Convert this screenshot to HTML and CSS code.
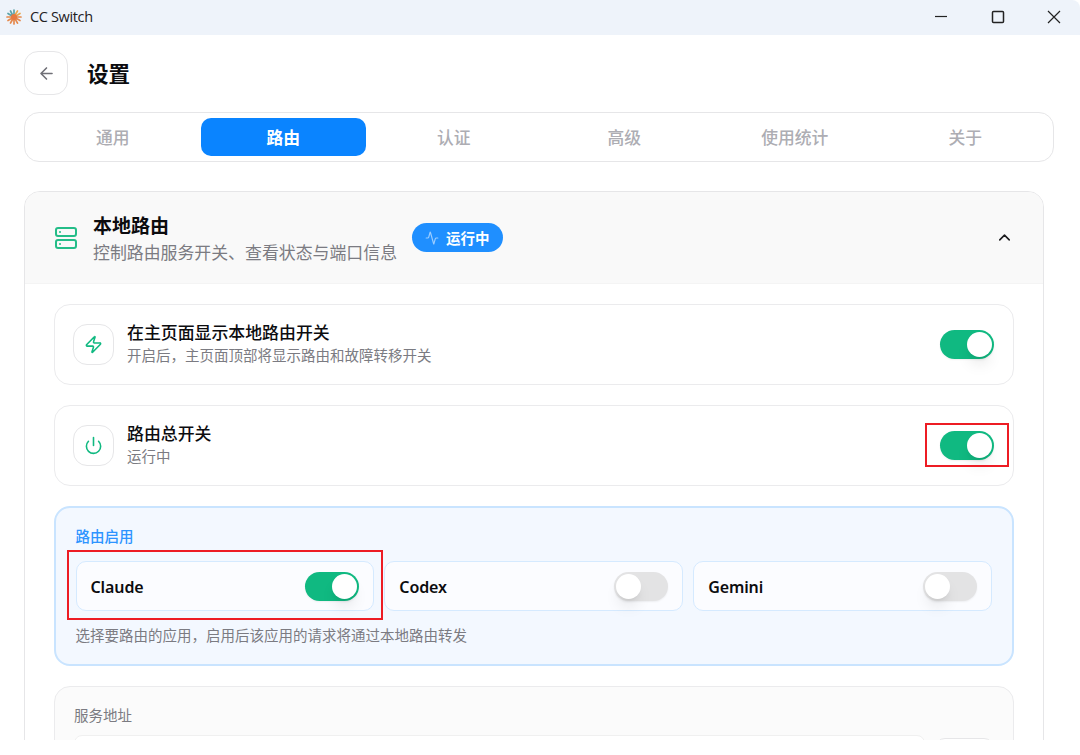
FILE: index.html
```
<!DOCTYPE html>
<html lang="zh-CN">
<head>
  <meta charset="UTF-8">
  <meta name="viewport" content="width=device-width, initial-scale=1.0">
  <title>CC Switch</title>
  <link rel="stylesheet" href="styles.css">
</head>
<body>
  <div class="window">
    <header class="titlebar">
      <svg class="app-logo" viewBox="0 0 16 16" fill="none" stroke-width="1.7" stroke-linecap="round">
        <path stroke="#e58a4e" d="M8 8L15 8M8 8L14 11.5M8 8L11.5 14.2M8 8V15M8 8L4.5 14M8 8L2 11.5M8 8L1 8"/>
        <path stroke="#5ba3a8" d="M6 7L2 4.500M6.500 6L4.500 2M8 5.500V1"/>
        <path stroke="#eba94f" d="M9 6L11.5 2M10 7L14 4.500"/>
        <circle cx="8" cy="8" r="3" fill="#e5793f"/>
      </svg>
      <span class="app-name">CC Switch</span>
      <div class="window-buttons">
        <svg viewBox="0 0 14 14"><path d="M1 6.500H13"/></svg>
        <svg viewBox="0 0 14 14"><rect x="1.500" y="1.500" width="11" height="11" rx="1" stroke-width="1.5"/></svg>
        <svg viewBox="0 0 14 14"><path d="M1 1L13 13M13 1L1 13"/></svg>
      </div>
    </header>

    <div class="page-header">
      <button type="button" class="back-button">
        <svg class="icon" viewBox="0 0 24 24"><path d="m12 19-7-7 7-7M19 12H5"/></svg>
      </button>
      <h1>设置</h1>
    </div>

    <nav class="tabs">
      <button type="button" class="tab">通用</button>
      <button type="button" class="tab active">路由</button>
      <button type="button" class="tab">认证</button>
      <button type="button" class="tab">高级</button>
      <button type="button" class="tab">使用统计</button>
      <button type="button" class="tab">关于</button>
    </nav>

    <section class="panel">
      <div class="panel-header">
        <svg class="icon server-icon" viewBox="0 0 24 24"><rect x="2" y="2" width="20" height="8" rx="2"/><rect x="2" y="14" width="20" height="8" rx="2"/><path d="M6 6h.01M6 18h.01"/></svg>
        <div class="panel-heading">
          <h2>本地路由</h2>
          <p>控制路由服务开关、查看状态与端口信息</p>
        </div>
        <span class="badge">
          <svg class="icon" viewBox="0 0 24 24"><path d="M22 12h-2.480a2 2 0 0 0-1.930 1.460l-2.350 8.360a.25.25 0 0 1-.48 0L9.240 2.180a.25.25 0 0 0-.48 0l-2.350 8.360A2 2 0 0 1 4.490 12H2"/></svg>
          <span>运行中</span>
        </span>
        <svg class="icon chevron" viewBox="0 0 24 24"><path d="m18 15-6-6-6 6"/></svg>
      </div>

      <div class="panel-body">
        <div class="card">
          <div class="card-icon">
            <svg class="icon" viewBox="0 0 24 24"><path d="M4 14a1 1 0 0 1-.78-1.630l9.900-10.200a.5.5 0 0 1 .86.460l-1.920 6.020A1 1 0 0 0 13 10h7a1 1 0 0 1 .78 1.630l-9.900 10.200a.5.5 0 0 1-.86-.46l1.920-6.020A1 1 0 0 0 11 14z"/></svg>
          </div>
          <div class="card-text">
            <h3>在主页面显示本地路由开关</h3>
            <p>开启后，主页面顶部将显示路由和故障转移开关</p>
          </div>
          <span class="switch on"></span>
        </div>

        <div class="card">
          <div class="card-icon">
            <svg class="icon" viewBox="0 0 24 24"><path d="M12 2v10M18.400 6.600a9 9 0 1 1-12.770.04"/></svg>
          </div>
          <div class="card-text">
            <h3>路由总开关</h3>
            <p>运行中</p>
          </div>
          <span class="switch on"></span>
          <span class="highlight highlight-switch"></span>
        </div>

        <div class="routing">
          <h4>路由启用</h4>
          <div class="apps">
            <div class="app">
              <span>Claude</span>
              <span class="switch on"></span>
              <span class="highlight highlight-app"></span>
            </div>
            <div class="app">
              <span>Codex</span>
              <span class="switch"></span>
            </div>
            <div class="app">
              <span>Gemini</span>
              <span class="switch"></span>
            </div>
          </div>
          <p>选择要路由的应用，启用后该应用的请求将通过本地路由转发</p>
        </div>

        <div class="service">
          <p>服务地址</p>
          <div class="service-row">
            <div class="address"></div>
            <div class="copy-button"></div>
          </div>
        </div>
      </div>
    </section>
  </div>
</body>
</html>
```
FILE: styles.css
```
* {
  box-sizing: border-box;
}

body {
  margin: 0;
  background-color: #fff;
  font-family: 'Noto Sans', 'Noto Sans CJK SC', sans-serif;
  color: #0c0c0f;
  overflow: hidden;
}

h1, h2, h3, h4, p {
  margin: 0;
}

button {
  font-family: inherit;
  cursor: pointer;
}

.window {
  height: 740px;
  overflow: hidden;
}

.icon {
  display: block;
  fill: none;
  stroke: currentColor;
  stroke-width: 2;
  stroke-linecap: round;
  stroke-linejoin: round;
}

/* Title bar */
.titlebar {
  height: 35px;
  padding: 0 19px 2px 6px;
  display: flex;
  align-items: center;
  background-color: #eef3fa;
  border-radius: 0 8px 0 0;
}

.app-logo {
  width: 16px;
  height: 16px;
  margin-right: 8px;
}

.app-name {
  font-family: 'Open Sans', sans-serif;
  font-size: 14.500px;
  letter-spacing: -0.35px;
  color: #1f2123;
}

.window-buttons {
  margin-left: auto;
  display: flex;
  gap: 42.500px;
}

.window-buttons svg {
  width: 14px;
  height: 14px;
  fill: none;
  stroke: #222;
  stroke-width: 1.2;
}

/* Page header */
.page-header {
  display: flex;
  align-items: center;
  gap: 19px;
  padding: 16px 24px 17px;
}

.back-button {
  width: 44px;
  height: 44px;
  padding: 0;
  display: flex;
  align-items: center;
  justify-content: center;
  background-color: #fff;
  border: 1px solid #e6e6e8;
  border-radius: 14px;
  color: #707077;
}

.back-button svg {
  width: 19px;
  height: 19px;
}

h1 {
  padding-top: 2px;
  font-size: 21.500px;
  line-height: 30px;
  font-weight: 700;
}

/* Tabs */
.tabs {
  height: 50px;
  margin: 0 26px 0 24px;
  padding: 5px;
  display: grid;
  grid-template-columns: repeat(6, 1fr);
  gap: 5px;
  border: 1px solid #e6e6e8;
  border-radius: 15px;
}

.tab {
  padding: 0 0 1px;
  border: none;
  border-radius: 10px;
  background: none;
  font-size: 16.800px;
  font-weight: 500;
  color: #adadb3;
}

.tab.active {
  background-color: #0a84ff;
  color: #fff;
  font-weight: 700;
}

/* Panel */
.panel {
  width: 1020px;
  height: 700px;
  margin: 29px 0 0 24px;
  border: 1px solid #e6e6e8;
  border-radius: 16px;
  overflow: hidden;
}

.panel-header {
  height: 92px;
  padding: 0 29px;
  display: flex;
  align-items: center;
  background-color: #f9f9f9;
  border-bottom: 1px solid #f4f4f4;
}

.server-icon {
  width: 24px;
  height: 24px;
  margin-right: 15px;
  color: #24bd88;
}

.panel-heading {
  padding-top: 4px;
}

h2 {
  font-size: 19px;
  line-height: 26px;
  font-weight: 700;
}

.panel-heading p {
  font-size: 16.900px;
  line-height: 27px;
  color: #7b7b82;
}

.badge {
  height: 29px;
  margin-left: 15px;
  padding: 0 13px;
  display: flex;
  align-items: center;
  gap: 7px;
  border-radius: 15px;
  background-color: #1f8fff;
  color: #fff;
  font-size: 14.500px;
  font-weight: 700;
}

.badge span {
  padding-bottom: 1px;
}

.badge svg {
  width: 14px;
  height: 14px;
  opacity: 0.55;
}

.chevron {
  width: 19px;
  height: 19px;
  margin-left: auto;
  color: #1b1b1e;
}

.panel-body {
  padding: 20px 29px;
  display: flex;
  flex-direction: column;
  gap: 20px;
}

/* Setting cards */
.card {
  position: relative;
  height: 81px;
  padding: 0 19px 0 18px;
  display: flex;
  align-items: center;
  border: 1px solid #ebebed;
  border-radius: 16px;
}

.card-icon {
  width: 41px;
  height: 41px;
  margin-right: 13px;
  display: flex;
  align-items: center;
  justify-content: center;
  border: 1px solid #e6e6e8;
  border-radius: 14px;
  color: #10b981;
}

.card-icon svg {
  width: 19px;
  height: 19px;
}

.card-text {
  padding-bottom: 2px;
}

h3 {
  font-size: 16.900px;
  line-height: 24px;
  font-weight: 500;
}

.card-text p {
  font-size: 14.500px;
  line-height: 21px;
  color: #7b7b82;
}

.switch {
  width: 54px;
  height: 29px;
  margin-left: auto;
  padding: 2px;
  display: flex;
  border-radius: 15px;
  background-color: #e3e3e4;
  box-shadow: 0 1px 2px rgba(0, 0, 0, 0.06);
}

.switch::after {
  content: "";
  width: 25px;
  height: 25px;
  border-radius: 50%;
  background-color: #fff;
  box-shadow: 0 10px 15px -3px rgba(0, 0, 0, 0.1), 0 4px 6px -4px rgba(0, 0, 0, 0.12);
}

.switch.on {
  justify-content: flex-end;
  background-color: #10b981;
}

.highlight {
  position: absolute;
  border: 2px solid #ed1c24;
}

.highlight-switch {
  top: 17px;
  right: 4px;
  width: 84px;
  height: 44px;
}

.highlight-app {
  top: -12px;
  left: -10px;
  width: 316px;
  height: 70px;
}

/* Routing toggles */
.routing {
  height: 160px;
  padding: 18px 20px 18px 19.500px;
  border: 2px solid #c9e4ff;
  border-radius: 16px;
  background-color: #f3f8ff;
}

h4 {
  font-size: 14.500px;
  line-height: 21px;
  font-weight: 500;
  color: #2d94ff;
}

.apps {
  margin: 14px 0;
  display: grid;
  grid-template-columns: repeat(3, 1fr);
  gap: 10px;
}

.app {
  position: relative;
  height: 50px;
  padding: 0 14px;
  display: flex;
  align-items: center;
  border: 1px solid #d5eaff;
  border-radius: 10px;
  background-color: #fbfcff;
  font-size: 16px;
  font-weight: 600;
  letter-spacing: -0.1px;
}

.app span:first-child {
  padding-top: 2px;
}

.routing p {
  font-size: 14.500px;
  line-height: 21px;
  color: #7b7b82;
}

/* Service address */
.service {
  height: 160px;
  padding: 18px 19px;
  border: 1px solid #ebebed;
  border-radius: 16px;
  background-color: #fbfbfb;
}

.service p {
  font-size: 14.500px;
  line-height: 21px;
  color: #7b7b82;
}

.service-row {
  margin-top: 9px;
  display: flex;
  align-items: center;
  gap: 10px;
}

.address {
  flex: 1;
  height: 46px;
  border: 1px solid #f0f0f0;
  border-radius: 8px;
  background-color: #fff;
}

.copy-button {
  width: 59px;
  height: 40px;
  border: 1px solid #e6e6e8;
  border-radius: 10px;
  background-color: #fff;
}
```
